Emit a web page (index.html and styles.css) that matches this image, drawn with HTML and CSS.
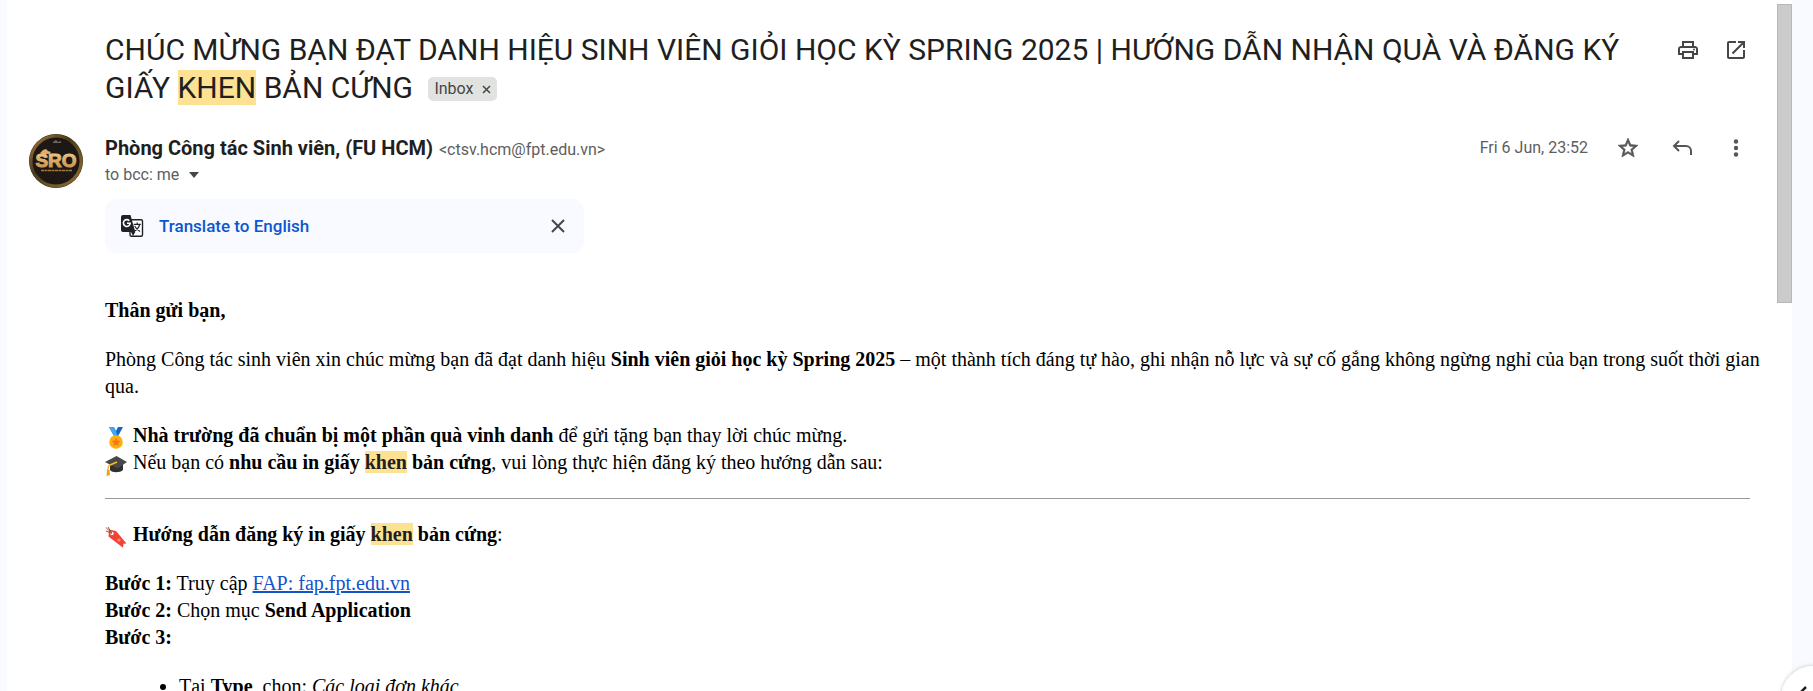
FILE: index.html
```html
<!DOCTYPE html>
<html lang="vi">
<head>
<meta charset="utf-8">
<meta name="viewport" content="width=device-width, initial-scale=1">
<title>Inbox</title>
<link rel="stylesheet" href="styles.css">
</head>
<body>
<div class="app">
  <main class="mail">
    <header class="subject">
      <h1 class="subject-text">CHÚC MỪNG BẠN ĐẠT DANH HIỆU SINH VIÊN GIỎI HỌC KỲ SPRING 2025 | HƯỚNG DẪN NHẬN QUÀ VÀ ĐĂNG KÝ GIẤY <mark class="hit">KHEN</mark> BẢN CỨNG
        <span class="chip">Inbox <button class="chip-close" type="button" aria-label="Remove label Inbox"><svg viewBox="0 0 9 9" width="9" height="9"><path d="M1 1l7 7M8 1L1 8" stroke="#444746" stroke-width="1.5" fill="none"/></svg></button></span>
      </h1>
      <div class="actions">
        <button class="icon-btn" type="button" aria-label="Print all"><svg viewBox="0 0 24 24" width="24" height="24" fill="#444746"><path d="M19 8h-1V3H6v5H5c-1.660 0-3 1.340-3 3v6h4v4h12v-4h4v-6c0-1.660-1.340-3-3-3zM8 5h8v3H8V5zm8 14H8v-4h8v4zm2-4v-2H6v2H4v-4c0-.550.450-1 1-1h14c.550 0 1 .450 1 1v4h-2z"/><circle cx="18" cy="11.500" r="1"/></svg></button>
        <button class="icon-btn" type="button" aria-label="Open in new window"><svg viewBox="0 0 24 24" width="24" height="24" fill="#444746"><path d="M19 19H5V5h7V3H5c-1.110 0-2 .9-2 2v14c0 1.100.890 2 2 2h14c1.100 0 2-.9 2-2v-7h-2v7zM14 3v2h3.590l-9.830 9.830 1.410 1.410L19 6.410V10h2V3h-7z"/></svg></button>
      </div>
    </header>

    <section class="sender">
      <svg class="avatar" viewBox="0 0 54 54" role="img" aria-label="SRO">
        <defs>
          <linearGradient id="ring" x1="0" y1="0" x2="1" y2="1"><stop offset="0" stop-color="#a87a3c"/><stop offset=".4" stop-color="#4a3a1c"/><stop offset=".7" stop-color="#6a5a2c"/><stop offset="1" stop-color="#9a6a2c"/></linearGradient>
          <linearGradient id="gold" x1="0" y1="0" x2="0" y2="1"><stop offset="0" stop-color="#f3cf8c"/><stop offset="1" stop-color="#c08a44"/></linearGradient>
        </defs>
        <circle cx="27" cy="27" r="27" fill="#3d3218"/>
        <circle cx="27" cy="27" r="25" fill="#1d1815" stroke="url(#ring)" stroke-width="3"/>
        <path d="M24 8l3-2 2 2 3-1v2h-8z" fill="#6d665c"/>
        <path d="M11 19l3-3 3-1 2 2 3 1-2 2h-7z" fill="#dfae66"/>
        <text class="avatar-text" x="27" y="33" text-anchor="middle" fill="url(#gold)" stroke="url(#gold)">SRO</text>
        <path d="M12 36.500h31" stroke="#a87a3c" stroke-width="1.500" stroke-dasharray="3 .5"/>
      </svg>
      <div class="sender-main">
        <div class="sender-row">
          <p class="from"><strong class="name">Phòng Công tác Sinh viên, (FU HCM)</strong> <span class="address">&lt;ctsv.hcm@fpt.edu.vn&gt;</span></p>
          <div class="tools">
            <time class="date">Fri 6 Jun, 23:52</time>
            <button class="icon-btn" type="button" aria-label="Star"><svg viewBox="0 0 24 24" width="24" height="24" fill="#555" stroke="#555" stroke-width=".6"><path d="M22 9.240l-7.190-.620L12 2 9.190 8.630 2 9.240l5.460 4.730L5.820 21 12 17.270 18.180 21l-1.630-7.030L22 9.240zM12 15.400l-3.760 2.270 1-4.280-3.320-2.880 4.380-.380L12 6.100l1.710 4.040 4.380.380-3.320 2.880 1 4.280L12 15.400z"/></svg></button>
            <button class="icon-btn" type="button" aria-label="Reply"><svg viewBox="0 0 24 24" width="24" height="24" fill="none" stroke="#555" stroke-width="2"><path d="M9 5L4 10l5 5M4 10h12a5 5 0 0 1 5 5v4"/></svg></button>
            <button class="icon-btn" type="button" aria-label="More"><svg viewBox="0 0 24 24" width="24" height="24" fill="#555"><circle cx="12" cy="5.500" r="2.200"/><circle cx="12" cy="12" r="2.200"/><circle cx="12" cy="18.500" r="2.200"/></svg></button>
          </div>
        </div>
        <p class="to">to bcc: me <button class="details" type="button" aria-label="Show details"><svg viewBox="0 0 10 6" width="10" height="6"><path d="M0 0h10L5 6z" fill="#444746"/></svg></button></p>
        <div class="translate">
          <svg class="translate-icon" viewBox="0 0 24 24" width="24" height="24">
            <rect x="10" y="5.700" width="12.500" height="16.500" rx="1.500" fill="#fff" stroke="#202124" stroke-width="1.400"/>
            <path d="M3 1h7.500l4.800 17H3a2 2 0 0 1-2-2V3a2 2 0 0 1 2-2z" fill="#202124"/>
            <path d="M11 18h4.300L13 22z" fill="#202124"/>
            <path d="M9.300 6.700A3.400 3.400 0 1 0 10.200 9.300H6.900" fill="none" stroke="#fff" stroke-width="1.600"/>
            <path d="M13.800 10.300h7M17.200 8.600v1.700M19.600 10.300c-.5 3-2.300 5-4.600 6.400M14.700 11.900c1 2.500 2.800 4.300 5.300 5.700" fill="none" stroke="#202124" stroke-width="1.200"/>
          </svg>
          <button class="translate-link" type="button">Translate to English</button>
          <button class="translate-close" type="button" aria-label="Close"><svg viewBox="0 0 14 14" width="14" height="14"><path d="M1 1l12 12M13 1L1 13" stroke="#444746" stroke-width="2" fill="none"/></svg></button>
        </div>
      </div>
    </section>

    <article class="body">
      <p><strong>Thân gửi bạn,</strong></p>
      <p>Phòng Công tác sinh viên xin chúc mừng bạn đã đạt danh hiệu <strong>Sinh viên giỏi học kỳ Spring 2025</strong> – một thành tích đáng tự hào, ghi nhận nỗ lực và sự cố gắng không ngừng nghỉ của bạn trong suốt thời gian qua.</p>
      <p>
        <svg class="emoji" viewBox="0 0 22 22"><path d="M4 0h5l4 8-3 3z" fill="#1e88e5"/><path d="M18 0h-5L9 8l3 3z" fill="#1565c0"/><path d="M4 0h5l3.500 8-3 2z" fill="#42a5f5"/><circle cx="11" cy="15" r="6.800" fill="#ffb300"/><circle cx="11" cy="15" r="5.200" fill="#ffa726"/><path d="M11 10.800l1.300 2.700 3 .4-2.200 2 .6 3-2.700-1.400-2.700 1.400.6-3-2.200-2 3-.4z" fill="#f57c00"/></svg>
        <strong>Nhà trường đã chuẩn bị một phần quà vinh danh</strong> để gửi tặng bạn thay lời chúc mừng.<br>
        <svg class="emoji" viewBox="0 0 22 22"><path d="M5 8v8c2 3 10 3 13 0V8z" fill="#303030"/><path d="M0 8L11.500 2 22 8l-9.500 6.500z" fill="#484848"/><path d="M12 8L4 11.500C2.500 13 3 16 3 18" fill="none" stroke="#f9b923" stroke-width="1.500"/><path d="M2 16h2.500l.5 5-3.500 1z" fill="#e6a21c"/></svg>
        Nếu bạn có <strong>nhu cầu in giấy <mark class="hit">khen</mark> bản cứng</strong>, vui lòng thực hiện đăng ký theo hướng dẫn sau:
      </p>
      <hr>
      <p>
        <svg class="emoji" viewBox="0 0 22 22"><path d="M4 3.500L11 5l10.500 12.500-3 .3-.5 4L3.500 10.500z" fill="#f44336"/><circle cx="7" cy="7.500" r="1.700" fill="#fff"/><path d="M7 7.500L1 5M6.500 7L3 1M6.500 7L1 1.500" fill="none" stroke="#a1553d" stroke-width="1"/><circle cx="14" cy="14" r="1.600" fill="#ff8a80"/></svg>
        <strong>Hướng dẫn đăng ký in giấy <mark class="hit">khen</mark> bản cứng</strong>:
      </p>
      <p><strong>Bước 1:</strong> Truy cập <a class="link" href="#fap">FAP: fap.fpt.edu.vn</a><br><strong>Bước 2:</strong> Chọn mục <strong>Send Application</strong><br><strong>Bước 3:</strong></p>
      <ul>
        <li>Tại <strong>Type</strong>, chọn: <em>Các loại đơn khác</em></li>
      </ul>
    </article>
  </main>
  <div class="scrollbar"><div class="thumb"></div></div>
  <button class="panel-toggle" type="button" aria-label="Show side panel"><svg viewBox="0 0 12 16" width="12" height="16"><path d="M10 1L3 8l7 7" fill="none" stroke="#1f1f1f" stroke-width="2.500"/></svg></button>
</div>
</body>
</html>
```
FILE: styles.css
```css
* { box-sizing: border-box; }

body {
  margin: 0;
  background: #f8faff;
  color: #1f1f1f;
  font-family: Roboto, "Liberation Sans", sans-serif;
}

p, h1 { margin: 0; }

button {
  padding: 0;
  border: 0;
  background: none;
  color: inherit;
  font: inherit;
  cursor: pointer;
}

svg { display: block; }

.app {
  position: relative;
  display: flex;
  height: 100vh;
  padding: 0 21px 0 7px;
  overflow: hidden;
}

.mail {
  flex: 1;
  min-width: 0;
  padding: 31px 27px 0 22px;
  background: #fff;
  overflow: hidden;
}

.hit { background: #fde293; color: #1f1f1f; }

.subject {
  display: flex;
  align-items: flex-start;
  gap: 48px;
  padding-left: 76px;
}

.subject-text {
  flex: 1;
  font-size: 30px;
  font-weight: 400;
  line-height: 38px;
}

.chip {
  display: inline-flex;
  align-items: center;
  gap: 8px;
  height: 24px;
  margin-left: 8px;
  padding: 0 6px;
  border-radius: 5px;
  background: #e1e3e1;
  color: #444746;
  font-size: 16px;
  line-height: 24px;
  vertical-align: 4px;
}

.actions { display: flex; gap: 24px; padding: 7px 2px 0 0; }

.sender { display: flex; gap: 22px; margin-top: 27px; }

.avatar { flex: none; width: 54px; height: 54px; }

.avatar-text { font: 700 19px "Liberation Sans", sans-serif; stroke-width: 1px; }

.sender-main { flex: 1; min-width: 0; }

.sender-row {
  display: flex;
  justify-content: space-between;
  align-items: center;
  height: 27px;
}

.name { margin-right: 2px; font-size: 20px; font-weight: 700; }

.address, .date, .to { color: #5e5e5e; font-size: 16px; }

.tools { display: flex; align-items: center; gap: 30px; padding-right: 2px; }

.date { margin-right: -2px; }

.to { display: flex; align-items: center; gap: 10px; line-height: 27px; }

.translate {
  display: flex;
  align-items: center;
  gap: 15px;
  width: 479px;
  max-width: 100%;
  height: 54px;
  margin-top: 11px;
  padding: 0 19px 0 15px;
  border-radius: 12px;
  background: #f8faff;
}

.translate-link { color: #0b57d0; font-size: 17px; font-weight: 500; }

.translate-close { margin-left: auto; }

.body {
  margin: 44px 0 0 76px;
  color: #000;
  font-family: "Liberation Serif", "Times New Roman", serif;
  font-size: 20px;
  line-height: 27px;
}

.body p { margin: 0 -16px 22px 0; }

.body hr { margin: 22px 0; border: solid #999; border-width: 1px 0 0; }

.body ul { margin: 0; padding-left: 74px; }

.emoji {
  display: inline-block;
  width: 22px;
  height: 22px;
  margin-right: 1px;
  vertical-align: -7px;
}

.link { color: #1155cc; }

.scrollbar { width: 15px; padding-top: 4px; background: #fff; }

.thumb { height: 299px; border: 1px solid #b8b8b8; background: #cbcbcb; }

.panel-toggle {
  position: absolute;
  right: -32px;
  bottom: -39px;
  display: flex;
  align-items: center;
  width: 64px;
  height: 64px;
  padding: 0 0 8px 15px;
  border-radius: 32px;
  background: #fff;
  box-shadow: 0 0 4px #c4c7c5;
}
```
